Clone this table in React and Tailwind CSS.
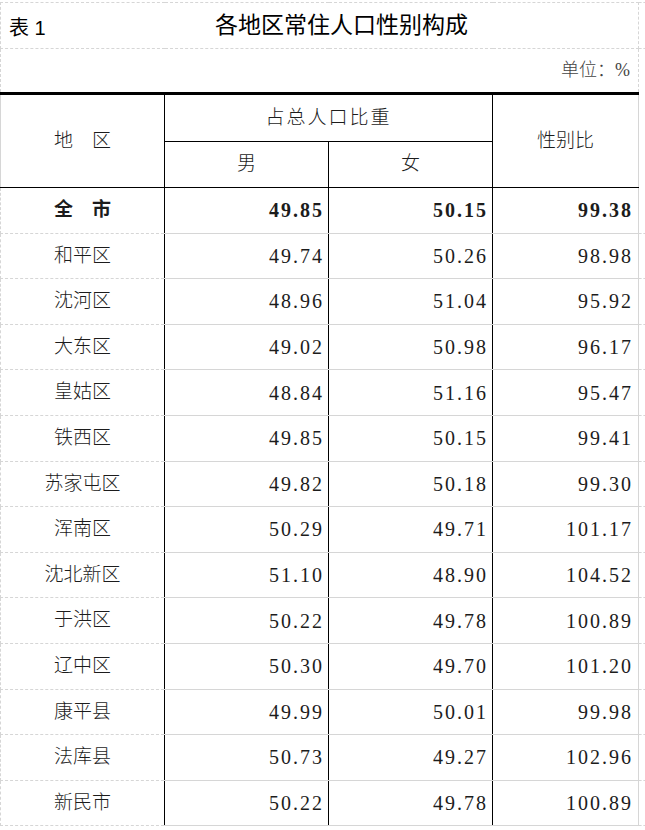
import React from "react";

const serif = { fontFamily: '"Liberation Serif", "Noto Sans CJK SC", serif' };
const sans = { fontFamily: '"Liberation Sans", "Noto Sans CJK SC", sans-serif' };

const rows = [
  ["全\u2003市", "49.85", "50.15", "99.38", true],
  ["和平区", "49.74", "50.26", "98.98"],
  ["沈河区", "48.96", "51.04", "95.92"],
  ["大东区", "49.02", "50.98", "96.17"],
  ["皇姑区", "48.84", "51.16", "95.47"],
  ["铁西区", "49.85", "50.15", "99.41"],
  ["苏家屯区", "49.82", "50.18", "99.30"],
  ["浑南区", "50.29", "49.71", "101.17"],
  ["沈北新区", "51.10", "48.90", "104.52"],
  ["于洪区", "50.22", "49.78", "100.89"],
  ["辽中区", "50.30", "49.70", "101.20"],
  ["康平县", "49.99", "50.01", "99.98"],
  ["法库县", "50.73", "49.27", "102.96"],
  ["新民市", "50.22", "49.78", "100.89"],
];

const grid = "border-dashed border-[#d6d6d6]";

export default function App() {
  return (
    <div className="w-[645px] h-[830px] overflow-hidden bg-white pt-[2px] text-[#1c1c1c]">
      <table className="table-fixed border-collapse w-[645px]">
        <colgroup>
          <col className="w-[164px]" />
          <col className="w-[164px]" />
          <col className="w-[164px]" />
          <col className="w-[146px]" />
          <col className="w-[7px]" />
        </colgroup>
        <tbody>
          {/* title */}
          <tr className="h-[46px]">
            <td colSpan={4} className={`border ${grid} relative`} style={sans}>
              <span className="absolute left-[8px] top-[10px] text-[20px] text-black">表 1</span>
              <div className="text-center text-[23px] text-black pl-[44px]">各地区常住人口性别构成</div>
            </td>
            <td className={`border-y ${grid}`} />
          </tr>
          <tr className="h-[45px]">
            <td colSpan={4} className={`border-x ${grid} text-right pr-[8px] text-[18px] text-[#444] font-light`} style={serif}>
              单位：%
            </td>
            <td />
          </tr>

          {/* header */}
          <tr className="h-[48px]">
            <td rowSpan={2} className={`border-t-[3px] border-t-black border-solid border-b border-b-black border-l ${grid} text-center text-[19px] font-light`} style={serif}>
              地&nbsp;&nbsp;&nbsp;&nbsp;区
            </td>
            <td colSpan={2} className="border-t-[3px] border-black border-solid border-l border-b text-center text-[19px] font-light tracking-[2px]" style={serif}>
              占总人口比重
            </td>
            <td rowSpan={2} className={`border-t-[3px] border-t-black border-solid border-b border-b-black border-l border-l-black border-r ${grid} text-center text-[19px] font-light text-[#1c1c1c]`} style={serif}>
              性别比
            </td>
            <td />
          </tr>
          <tr className="h-[46px]">
            <td className="border border-black border-solid text-center text-[19px] font-light" style={serif}>
              男
            </td>
            <td className="border border-black border-solid text-center text-[19px] font-light" style={serif}>
              女
            </td>
            <td />
          </tr>

          {rows.map(([name, m, f, r, bold], i) => (
            <tr key={i} className="h-[45.6px]">
              <td
                className={`border-l border-b ${grid} text-center text-[19px] ${bold ? "font-bold" : "font-light"}`}
                style={serif}
              >
                {name}
              </td>
              {[m, f, r].map((v, j) => (
                <td
                  key={j}
                  className={`border-l border-l-black border-solid border-b ${grid} ${j === 2 ? `border-r ${grid}` : ""} text-right text-[20px] tracking-[2px] ${j === 2 ? "pr-[5px]" : "pr-[4px]"} ${bold ? "font-bold" : ""}`}
                  style={serif}
                >
                  {v}
                </td>
              ))}
              <td className={`border-b ${grid}`} />
            </tr>
          ))}
        </tbody>
      </table>
    </div>
  );
}
